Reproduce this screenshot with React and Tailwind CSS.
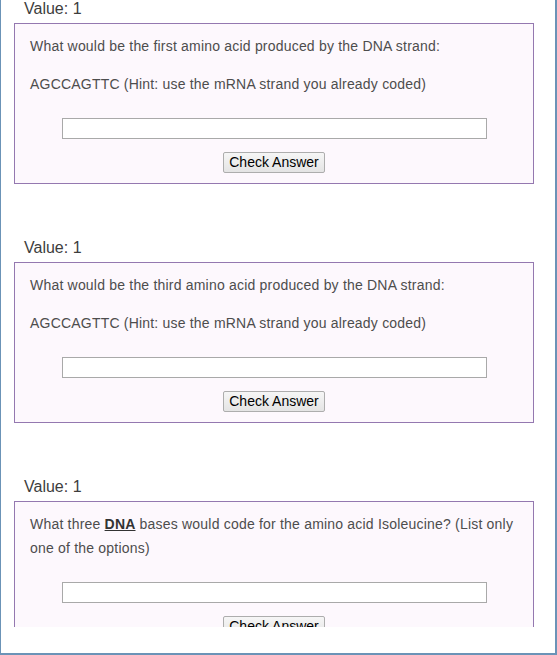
import React from "react";

function Question({ children }) {
  return (
    <div className="flex flex-col">
      <div className="h-[18px] pl-[10px] text-[16px] leading-[18px] text-[#3d3d3d]">Value: 1</div>
      <div className="mt-[5px] h-[161px] border border-[#9478b0] bg-[#fdf8fd] px-[15px] pt-[10px] text-[14px] leading-[24px] tracking-[0.2px] text-[#4d4d4d]">
        {children}
        <input
          type="text"
          className="mx-auto mt-[22px] block h-[21px] w-[425px] border border-[#a9a9a9] bg-white outline-none"
        />
        <div className="mt-[13px] flex justify-center">
          <button className="h-[21px] w-[102px] rounded-[2px] border border-[#adadad] bg-gradient-to-b from-[#f6f6f6] to-[#e4e4e4] text-[14px] leading-[19px] tracking-normal text-black">
            Check Answer
          </button>
        </div>
      </div>
    </div>
  );
}

export default function App() {
  return (
    <div
      className="h-[655px] w-[557px] border-b-2 border-l-[1px] border-r-2 border-[#6b93b7] bg-white"
      style={{ fontFamily: '"Liberation Sans", Arial, sans-serif' }}
    >
      <div className="flex h-[627px] flex-col gap-[55px] overflow-hidden pl-[13px] pr-[21px]">
        <Question>
          <p>What would be the first amino acid produced by the DNA strand:</p>
          <p className="mt-[14px]">AGCCAGTTC (Hint: use the mRNA strand you already coded)</p>
        </Question>
        <Question>
          <p>What would be the third amino acid produced by the DNA strand:</p>
          <p className="mt-[14px]">AGCCAGTTC (Hint: use the mRNA strand you already coded)</p>
        </Question>
        <Question>
          <p className="pr-[2px]">
            What three <b className="font-bold text-[#333] underline">DNA</b> bases would code for the amino acid Isoleucine? (List only one of the options)
          </p>
        </Question>
      </div>
    </div>
  );
}
